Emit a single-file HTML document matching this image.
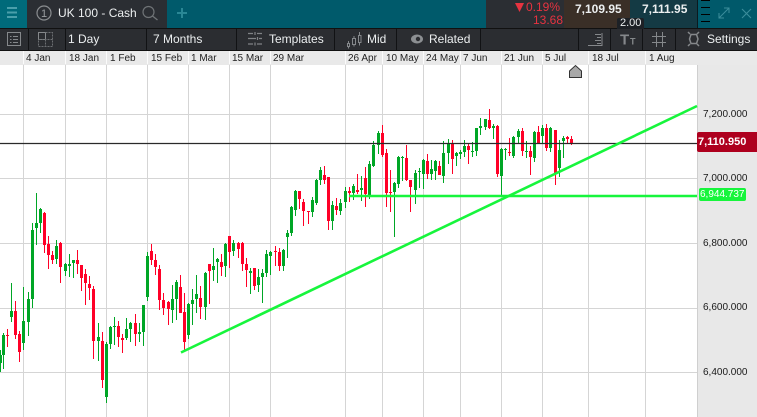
<!DOCTYPE html>
<html><head><meta charset="utf-8"><style>
html,body{margin:0;padding:0;width:757px;height:417px;overflow:hidden;background:#fff}
body{position:relative;font-family:"Liberation Sans",sans-serif}
.a{position:absolute}
.t{position:absolute;white-space:nowrap;color:#eceff0;font-size:12px;line-height:14px}
.d{position:absolute;white-space:nowrap;color:#222;font-size:10px;line-height:12px;top:53px}
.y{position:absolute;white-space:nowrap;color:#1a1a1a;font-size:10px;line-height:12px;left:703px}
.s{position:absolute;top:29px;width:1px;height:21px;background:#111214}
.w{position:absolute;top:51px;width:1px;height:13px;background:#fbfbfb}
svg{position:absolute;overflow:visible}
</style></head><body>
<div class="a" style="left:0;top:0;width:757px;height:28px;background:#005a6b"></div>
<div class="a" style="left:0;top:0;width:27px;height:28px;background:#006a7a"></div>
<div class="a" style="left:27px;top:0;width:140px;height:28px;background:#2b2e33"></div>
<div class="a" style="left:486px;top:0;width:78px;height:28px;background:#2b2e33"></div>
<div class="a" style="left:564px;top:0;width:66px;height:28px;background:#3a2f27"></div>
<div class="a" style="left:630px;top:0;width:67px;height:28px;background:#143a44"></div>
<div class="a" style="left:697px;top:0;width:1px;height:28px;background:#0b1a1f"></div>
<div class="a" style="left:698px;top:0;width:59px;height:28px;background:#00596a"></div>
<div class="a" style="left:0;top:28px;width:757px;height:23px;background:#2b2d31;border-top:1px solid #111;border-bottom:1px solid #111;box-sizing:border-box"></div>
<div class="a" style="left:0;top:51px;width:757px;height:14px;background:#e9e9e9"></div>
<div class="a" style="left:697px;top:65px;width:60px;height:352px;background:#e8e8e8;border-left:1px solid #cfcfcf;box-sizing:border-box"></div>

<svg width="757" height="417" style="left:0;top:0">
<path d="M7 8H17M7 12.500H17M7 17H17" stroke="#4a9fab" stroke-width="2" fill="none"/>
<circle cx="44" cy="13" r="7" stroke="#8a8d90" stroke-width="1.200" fill="none"/>
<text x="44" y="17" font-size="11" fill="#9a9da0" text-anchor="middle" font-family="Liberation Sans">1</text>
<circle cx="148.500" cy="12" r="5.500" stroke="#6f7376" stroke-width="1.200" fill="none"/>
<path d="M152.500 16L157.500 20" stroke="#6f7376" stroke-width="1.300"/>
<path d="M182 8V18M177 13H187" stroke="#2a8795" stroke-width="2"/>
<path d="M701 0.500H710M701 7.500H710M701 14.500H710M701 21.500H710" stroke="#000" stroke-width="1"/>
<path d="M719 18L729 8M724 8H729V13M719 13V18H724" stroke="#3b8d9b" stroke-width="1" fill="none"/>
<path d="M742 9L751 18M751 9L742 18" stroke="#3b8d9b" stroke-width="1.100"/>
<path d="M7.500 32.500H20.500V45.500H7.500ZM10 36.500H11.500M13 36.500H18M10 39.500H11.500M13 39.500H18M10 42.500H11.500M13 42.500H18" stroke="#85888b" fill="none"/>
<path d="M38.500 32.500H45.500V39.500H38.500Z" stroke="#85888b" fill="none"/>
<path d="M45.500 32.500H52.500V46.500H38.500V39.500H52.500M45.500 39.500V46.500" stroke="#6c6f72" stroke-dasharray="2 1" fill="none"/>
<path d="M248 33.500H253M257 33.500H262M248 38.500H256M259 38.500H262M248 44H253M257 44H262M255 32V35M257.500 37V40M255 42.500V45.500" stroke="#808386" stroke-width="1.200" fill="none"/>
<path d="M347.500 43.500h2v3h-2zM352.500 38.500h3v6h-3zM358.500 35.500h2.500v7h-2.500zM348.500 41v2.500M348.500 46.500v2M354 36v2.500M354 44.500v2M359.500 32v3.500M359.500 42.500v3" stroke="#85888b" fill="none"/>
<ellipse cx="417" cy="39" rx="6" ry="4.500" fill="#8c8f92"/><circle cx="418" cy="39" r="2.200" fill="#2b2d31"/>
<path d="M588 45.500H602V33M595 34.500H601M597 37.500H601M595 40.500H601M597 43.500H601" stroke="#85888b" fill="none"/>
<text x="620" y="44.500" font-size="15" font-weight="bold" fill="#85888b" font-family="Liberation Sans">T</text>
<text x="630" y="44.500" font-size="9" font-weight="bold" fill="#85888b" font-family="Liberation Sans">T</text>
<path d="M652 36.500H666M652 42.500H666M656.500 32V47M662.500 32V47" stroke="#85888b" fill="none"/>
<path d="M689.500 39L691 34.500H696.500L698 39L696.500 43.500H691Z" stroke="#85888b" stroke-width="1.500" fill="none"/>
<path d="M690 34L688 32M697 34L699 32M690 44L688 46M697 44L699 46" stroke="#85888b" stroke-width="1.500"/>

<path d="M23.500 65V417M65.500 65V417M106.500 65V417M147.500 65V417M188.500 65V417M229.500 65V417M270.500 65V417M345.500 65V417M382.500 65V417M423.500 65V417M460.500 65V417M501.500 65V417M542.500 65V417M588.500 65V417M645.500 65V417M0 114.500H697M0 178.500H697M0 243.500H697M0 308.500H697M0 372.500H697" stroke="#d5d5d5" fill="none"/>

<path d="M0.500 350V372M3.500 333V369M11.500 283V322M23.500 287V350M28.500 292V336M32.500 223V308M36.500 193V245M40.500 208V233M56.500 240V264M65.500 263V276M69.500 254V277M73.500 260V278M98.500 323V361M106.500 342V403M110.500 326V349M114.500 317V345M126.500 318V340M130.500 322V342M139.500 323V342M143.500 305V346M147.500 252V301M172.500 285V323M176.500 280V320M188.500 303V339M192.500 289V325M196.500 275V313M205.500 272V320M213.500 248V281M217.500 258V283M225.500 243V277M233.500 240V256M250.500 268V294M258.500 269V292M262.500 269V303M266.500 250V277M270.500 251V275M283.500 249V271M287.500 230V258M291.500 206V236M295.500 190V216M312.500 197V217M316.500 179V205M320.500 167V185M332.500 201V230M340.500 199V215M345.500 187V208M353.500 184V200M361.500 176V201M369.500 161V199M373.500 141V167M378.500 131V154M394.500 182V237M398.500 156V188M402.500 156V181M415.500 170V204M419.500 168V188M423.500 159V189M431.500 160V180M435.500 160V180M443.500 141V183M448.500 139V164M456.500 152V166M460.500 150V159M464.500 140V157M472.500 142V157M476.500 128V156M480.500 118V135M485.500 119V130M493.500 124V139M501.500 148V195M505.500 148V160M513.500 136V158M518.500 129V143M526.500 141V158M534.500 131V162M542.500 125V144M550.500 127V152M559.500 140V177M563.500 136V158" stroke="#00a626" fill="none"/>
<path d="M0.500 355V363M3.500 335V355M11.500 311V317M23.500 321V343M28.500 299V322M32.500 230V299M36.500 223V228M40.500 209V223M56.500 246V259M65.500 264V271M69.500 264V266M73.500 260V263M98.500 337V341M106.500 344V397M110.500 327V344M114.500 326V327M126.500 329V338M130.500 323V329M139.500 332V334M143.500 305V332M147.500 256V297M172.500 299V310M176.500 282V299M188.500 304V335M192.500 300V304M196.500 294V299M205.500 273V307M213.500 266V270M217.500 259V262M225.500 244V266M233.500 243V251M250.500 271V273M258.500 277V285M262.500 273V277M266.500 254V273M270.500 252V256M283.500 250V266M287.500 233V237M291.500 207V233M295.500 191V210M312.500 200V212M316.500 180V203M320.500 170V180M332.500 205V221M340.500 203V211M345.500 191V202M353.500 186V193M361.500 188V190M369.500 164V196M373.500 145V166M378.500 133V145M394.500 183V192M398.500 157V184M402.500 157V158M415.500 173V190M419.500 171V172M423.500 160V174M431.500 169V174M435.500 161V171M443.500 153V176M448.500 143V153M456.500 153V156M460.500 152V154M464.500 146V152M472.500 151V152M476.500 128V151M480.500 126V128M485.500 119V127M493.500 126V128M501.500 149V176M505.500 149V150M513.500 137V156M518.500 131V137M526.500 151V152M534.500 132V158M542.500 128V136M550.500 128V148M559.500 150V168M563.500 138V141" stroke="#00a626" stroke-width="3" fill="none"/>
<path d="M7.500 329V347M15.500 301V339M19.500 331V362M44.500 212V253M48.500 236V269M52.500 251V264M60.500 242V283M77.500 250V274M81.500 265V291M85.500 269V305M89.500 276V300M93.500 286V359M102.500 332V388M118.500 321V347M122.500 334V353M135.500 314V346M151.500 244V265M155.500 254V275M159.500 265V310M163.500 293V315M168.500 301V325M180.500 275V313M184.500 293V351M200.500 286V319M209.500 264V304M221.500 254V276M229.500 236V268M238.500 242V258M242.500 242V271M246.500 258V287M254.500 268V290M275.500 246V266M279.500 248V271M299.500 191V209M303.500 199V226M308.500 211V224M324.500 166V184M328.500 177V230M336.500 198V215M349.500 187V202M357.500 174V194M365.500 167V207M382.500 125V157M386.500 149V207M390.500 170V212M406.500 145V181M410.500 180V212M427.500 154V179M439.500 161V175M452.500 140V174M468.500 143V164M489.500 109V129M497.500 125V177M509.500 138V156M522.500 128V156M530.500 146V175M538.500 126V143M546.500 124V151M555.500 130V185M567.500 136V143M571.500 136V145" stroke="#ff0027" fill="none"/>
<path d="M7.500 335V336M15.500 311V335M19.500 334V352M44.500 213V245M48.500 244V255M52.500 255V260M60.500 243V267M77.500 260V264M81.500 265V278M85.500 274V283M89.500 284V288M93.500 289V341M102.500 341V380M118.500 326V337M122.500 338V340M135.500 323V334M151.500 251V260M155.500 260V267M159.500 269V300M163.500 300V308M168.500 302V309M180.500 287V313M184.500 312V342M200.500 298V307M209.500 264V271M221.500 262V267M229.500 236V252M238.500 243V249M242.500 243V264M246.500 264V270M254.500 268V286M275.500 251V252M279.500 252V266M299.500 191V199M303.500 202V211M308.500 211V212M324.500 175V180M328.500 177V221M336.500 206V210M349.500 191V193M357.500 190V192M365.500 178V194M382.500 133V155M386.500 153V193M390.500 192V193M406.500 158V180M410.500 180V187M427.500 161V174M439.500 166V175M452.500 143V159M468.500 146V150M489.500 120V128M497.500 126V174M509.500 152V153M522.500 131V151M530.500 151V157M538.500 132V143M546.500 128V148M555.500 130V174M567.500 137V139M571.500 139V143" stroke="#ff0027" stroke-width="3" fill="none"/>

<path d="M0 143.500H697" stroke="#2a2a2a" stroke-width="1.200"/>
<path d="M349 196H697" stroke="#17f53c" stroke-width="2.400"/>
<path d="M181 352.500L697 106" stroke="#17f53c" stroke-width="2.600"/>
<path d="M569.500 77.500V71L575.500 65.500L581.500 71V77.500Z" fill="#a8a8a8" stroke="#333"/>
</svg>

<div class="a" style="left:617px;top:18px;width:27px;height:11px;background:#1d2126;border-radius:2px 2px 0 0"></div>
<div class="t" style="left:58px;top:6px">UK 100 - Cash</div>
<div class="t" style="left:526px;top:0px;font-size:12px;color:#e63340">0.19%</div>
<svg width="10" height="9" style="left:515px;top:3px"><path d="M0 0H9L4.500 9Z" fill="#e63340"/></svg>
<div class="t" style="left:533px;top:13px;color:#e63340;font-size:12px">13.68</div>
<div class="t" style="left:575px;top:2px;font-weight:bold">7,109.95</div>
<div class="t" style="left:642px;top:2px;font-weight:bold">7,111.95</div>
<div class="t" style="left:620px;top:16px;font-size:11px">2.00</div>

<div class="t" style="left:68px;top:32px">1 Day</div>
<div class="t" style="left:153px;top:32px">7 Months</div>
<div class="t" style="left:269px;top:32px">Templates</div>
<div class="t" style="left:367px;top:32px">Mid</div>
<div class="t" style="left:429px;top:32px">Related</div>
<div class="t" style="left:707px;top:32px">Settings</div>
<div class="s" style="left:28px"></div><div class="s" style="left:65px"></div><div class="s" style="left:146px"></div><div class="s" style="left:236px"></div><div class="s" style="left:334px"></div><div class="s" style="left:396px"></div><div class="s" style="left:480px"></div><div class="s" style="left:578px"></div><div class="s" style="left:610px"></div><div class="s" style="left:642px"></div><div class="s" style="left:675px"></div>

<div class="w" style="left:23px"></div><div class="w" style="left:65px"></div><div class="w" style="left:106px"></div><div class="w" style="left:147px"></div><div class="w" style="left:188px"></div><div class="w" style="left:229px"></div><div class="w" style="left:270px"></div><div class="w" style="left:345px"></div><div class="w" style="left:382px"></div><div class="w" style="left:423px"></div><div class="w" style="left:460px"></div><div class="w" style="left:501px"></div><div class="w" style="left:542px"></div><div class="w" style="left:588px"></div><div class="w" style="left:645px"></div>
<div class="d" style="left:26px">4 Jan</div><div class="d" style="left:69px">18 Jan</div><div class="d" style="left:110px">1 Feb</div><div class="d" style="left:151px">15 Feb</div><div class="d" style="left:191px">1 Mar</div><div class="d" style="left:232px">15 Mar</div><div class="d" style="left:273px">29 Mar</div><div class="d" style="left:348px">26 Apr</div><div class="d" style="left:386px">10 May</div><div class="d" style="left:426px">24 May</div><div class="d" style="left:463px">7 Jun</div><div class="d" style="left:504px">21 Jun</div><div class="d" style="left:545px">5 Jul</div><div class="d" style="left:592px">18 Jul</div><div class="d" style="left:649px">1 Aug</div>

<div class="y" style="top:109px">7,200.000</div>
<div class="y" style="top:173px">7,000.000</div>
<div class="y" style="top:238px">6,800.000</div>
<div class="y" style="top:302px">6,600.000</div>
<div class="y" style="top:367px">6,400.000</div>
<div class="a" style="left:697px;top:132px;width:60px;height:20px;background:#ae001e;border-radius:2px 0 0 2px"></div>
<div class="t" style="left:698px;top:135px;font-size:11px;font-weight:bold;color:#fff">7,110.950</div>
<div class="a" style="left:699px;top:188px;width:47px;height:13px;background:#17f53c;border-radius:2px"></div>
<div class="t" style="left:700px;top:188px;font-size:10px;color:#fff;line-height:13px">6,944.737</div>
</body></html>
